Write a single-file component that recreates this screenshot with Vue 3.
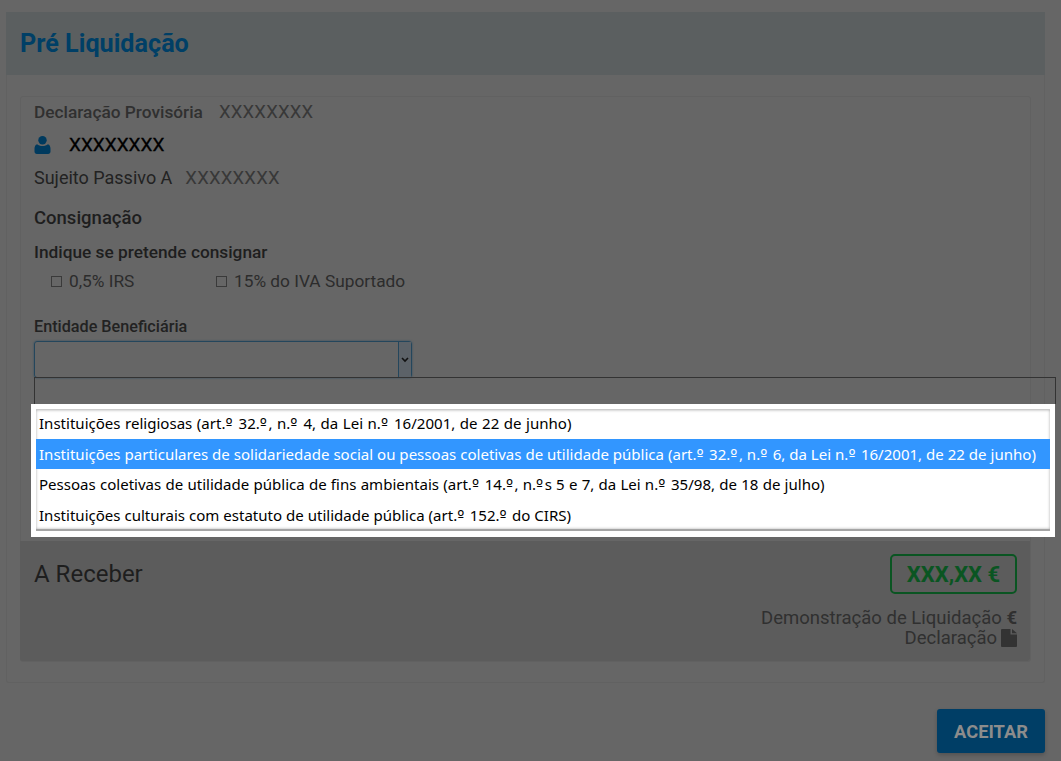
<template>
  <div class="page">
    <section class="panel">
      <header class="panel-head"><h1>Pré Liquidação</h1></header>
      <div class="card">
        <div class="line first"><b class="muted">Declaração Provisória</b><span class="mask">XXXXXXXX</span></div>
        <div class="line person">
          <svg class="user" viewBox="0 0 16 18" width="17" height="18"><circle cx="8" cy="4.3" r="4.2" fill="#003a5e"/><path d="M2.6 8.2C3.8 9.4 5.8 10 8 10s4.2-.6 5.4-1.8c1.6.5 2.6 2.2 2.6 4.6v2.7c0 1.4-1 2.5-2.4 2.5H2.4C1 18 0 16.900 0 15.500v-2.700c0-2.400 1-4.100 2.600-4.600z" fill="#003a5e"/></svg>
          <span class="name">XXXXXXXX</span>
        </div>
        <div class="line sp"><span>Sujeito Passivo A</span><span class="mask">XXXXXXXX</span></div>
        <h2>Consignação</h2>
        <div class="ask">Indique se pretende consignar</div>
        <div class="checks">
          <label class="check c1"><i></i>0,5% IRS</label>
          <label class="check"><i></i>15% do IVA Suportado</label>
        </div>
        <div class="ent">Entidade Beneficiária</div>
        <div class="select"><span class="arrow"><svg width="8" height="6" viewBox="0 0 8 6"><path d="M1 1l3 3 3-3" fill="none" stroke="#111" stroke-width="1.600"/></svg></span></div>
        <div class="popup">
          <ul class="list">
            <li v-for="(o, i) in options" :key="i" :class="{ on: i === 1 }"><template v-for="(p, j) in o.split('º')" :key="j"><span v-if="j > 0" class="ord">º</span>{{ p }}</template></li>
          </ul>
        </div>
        <div class="receive">
          <div class="top">
            <span class="a">A Receber</span>
            <span class="amount">XXX,XX €</span>
          </div>
          <div class="links">
            <div>Demonstração de Liquidação <b class="eur">€</b></div>
            <div class="decl">Declaração
              <svg width="16" height="18" viewBox="0 0 16 18"><path d="M0 1a1 1 0 0 1 1-1h8.500v5.500H16V17a1 1 0 0 1-1 1H1a1 1 0 0 1-1-1zM11 0l5 4.300h-5z" fill="#333"/></svg>
            </div>
          </div>
        </div>
      </div>
    </section>
    <div class="actions"><button>ACEITAR</button></div>
  </div>
</template>

<script setup>
const options = [
  'Instituições religiosas (art.º 32.º, n.º 4, da Lei n.º 16/2001, de 22 de junho)',
  'Instituições particulares de solidariedade social ou pessoas coletivas de utilidade pública (art.º 32.º, n.º 6, da Lei n.º 16/2001, de 22 de junho)',
  'Pessoas coletivas de utilidade pública de fins ambientais (art.º 14.º, n.ºs 5 e 7, da Lei n.º 35/98, de 18 de julho)',
  'Instituições culturais com estatuto de utilidade pública (art.º 152.º do CIRS)'
]
</script>

<style>
html, body { margin: 0; background: #666; overflow: hidden; }
</style>

<style scoped>
.page { width: 1061px; height: 761px; box-sizing: border-box; padding: 12px 16px 0 6px; background: #666; font-family: Roboto, sans-serif; color: #2a2a2a; }
.panel { height: 671px; box-sizing: border-box; border: 1px solid #616161; border-top: 0; border-radius: 3px; }
.panel-head { height: 63px; margin: 0 -1px; background: #5b5f60; display: flex; align-items: center; padding-left: 14px; }
h1 { margin: 0; font-size: 25.200px; font-weight: 700; color: #003f66; }
.card { position: relative; margin: 21px 13px 0 13px; height: 566px; box-sizing: border-box; border: 1px solid #616161; border-radius: 3px; padding: 0 13px; }
.line { display: flex; align-items: center; font-size: 18px; }
.first { height: 30px; gap: 16px; }
.muted { font-weight: 500; color: #303030; font-size: 17.300px; }
.mask { color: #383838; font-size: 18.500px; letter-spacing: 0.200px; }
.person { height: 35px; gap: 18px; }
.name { color: #000; font-size: 19px; font-weight: 400; -webkit-text-stroke: 0.300px #000; }
.sp { height: 31px; gap: 13px; color: #222; }
h2 { margin: 12px 0 0; height: 26px; line-height: 26px; font-size: 18.500px; font-weight: 500; color: #1e1e1e; }
.ask { margin-top: 9px; font-size: 17.300px; font-weight: 500; height: 24px; line-height: 24px; color: #1e1e1e; }
.checks { display: flex; height: 30px; margin-top: 2px; align-items: center; padding-left: 17px; font-size: 17.300px; color: #2c2c2c; }
.check { display: flex; align-items: center; gap: 7px; }
.c1 { width: 165px; }
.check i { width: 9px; height: 9px; border: 1px solid #3a3a3a; background: #666; display: block; }
.ent { margin-top: 21px; font-size: 16.200px; font-weight: 500; color: #222; height: 20px; line-height: 20px; }
.select { margin-top: 4px; width: 378px; height: 37px; box-sizing: border-box; border: 1px solid #24465c; border-radius: 3px; box-shadow: 0 0 2px #2a4a60; display: flex; justify-content: flex-end; }
.arrow { width: 12px; border-left: 1px solid #24465c; background: #5c6268; display: flex; align-items: center; justify-content: center; }
.popup { position: absolute; left: 10px; top: 307px; width: 1024px; height: 133px; box-sizing: border-box; background: #fff; padding: 5px; z-index: 2; }
.popup::before { content: ''; position: absolute; left: 3px; right: -1px; top: -27px; height: 27px; box-sizing: border-box; border: 1px solid #333; border-bottom: 0; }
.list { list-style: none; margin: 0; padding: 0; height: 122px; box-sizing: border-box; background: #fff; border-top: 1px solid #ccc; border-bottom: 2px solid #a5a5a5; box-shadow: inset 0 0 3px #aaa; font-family: "Noto Sans", sans-serif; font-size: 15.050px; color: #000; }
.list li { height: 30px; line-height: 30px; padding-left: 3px; white-space: nowrap; }
.list li:first-child { height: 29px; line-height: 27px; word-spacing: 0.600px; }
.list li:nth-child(3) { word-spacing: 0.300px; }
.list li:last-child { line-height: 32px; }
.list li.on { background: #3296ff; color: #fff; }
.ord { font-family: "DejaVu Sans", sans-serif; letter-spacing: 1.500px; }
.receive { position: absolute; left: -1px; right: 0; top: 444px; bottom: 0; background: #5c5c5c; border-radius: 0 0 3px 3px; padding: 13px 13px 0 14px; }
.top { display: flex; justify-content: space-between; align-items: center; }
.a { font-size: 24px; color: #1e1e1e; }
.amount { width: 127px; height: 40px; box-sizing: border-box; border: 2px solid #0a5522; border-radius: 5px; display: flex; align-items: center; justify-content: center; font-size: 22px; font-weight: 700; color: #0a5522; }
.links { margin-top: 14px; text-align: right; font-size: 18.500px; color: #303030; line-height: 20px; }
.eur { font-weight: 700; }
.decl { display: flex; justify-content: flex-end; align-items: center; gap: 4px; }
.actions { display: flex; justify-content: flex-end; margin-top: 26px; }
button { width: 108px; height: 44px; border: 0; border-radius: 3px; background: #003e66; color: #8c8c8c; font-family: Roboto, sans-serif; font-size: 18.300px; font-weight: 700; box-shadow: 0 2px 4px rgba(0,0,0,.2); }
</style>
